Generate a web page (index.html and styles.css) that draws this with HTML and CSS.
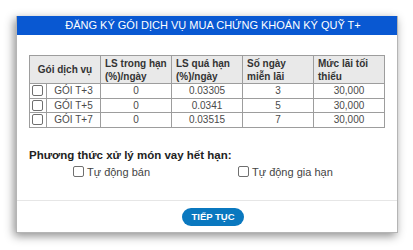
FILE: index.html
```html
<!DOCTYPE html>
<html lang="vi">
<head>
    <meta charset="UTF-8">
    <meta name="viewport" content="width=device-width, initial-scale=1.0">
    <title>Đăng ký gói dịch vụ</title>
    <link rel="stylesheet" href="styles.css">
</head>
<body>
    <div class="dialog">
        <div class="dialog-header">ĐĂNG KÝ GÓI DỊCH VỤ MUA CHỨNG KHOÁN KÝ QUỸ T+</div>

        <div class="dialog-body">
            <table class="goi-table">
                <colgroup>
                    <col class="c-check">
                    <col class="c-ten">
                    <col class="c-so">
                    <col class="c-so">
                    <col class="c-so">
                    <col class="c-so">
                </colgroup>
                <thead>
                    <tr>
                        <th colspan="2" class="col-goi">Gói dịch vụ</th>
                        <th>LS trong hạn<br>(%)/ngày</th>
                        <th>LS quá hạn<br>(%)/ngày</th>
                        <th>Số ngày<br>miễn lãi</th>
                        <th>Mức lãi tối<br>thiểu</th>
                    </tr>
                </thead>
                <tbody>
                    <tr>
                        <td class="col-check"><input type="checkbox"></td>
                        <td>GÓI T+3</td>
                        <td>0</td>
                        <td>0.03305</td>
                        <td>3</td>
                        <td>30,000</td>
                    </tr>
                    <tr>
                        <td class="col-check"><input type="checkbox"></td>
                        <td>GÓI T+5</td>
                        <td>0</td>
                        <td>0.0341</td>
                        <td>5</td>
                        <td>30,000</td>
                    </tr>
                    <tr>
                        <td class="col-check"><input type="checkbox"></td>
                        <td>GÓI T+7</td>
                        <td>0</td>
                        <td>0.03515</td>
                        <td>7</td>
                        <td>30,000</td>
                    </tr>
                </tbody>
            </table>

            <div class="phuong-thuc">Phương thức xử lý món vay hết hạn:</div>
            <div class="options">
                <label class="option opt-ban"><input type="checkbox"> Tự động bán</label>
                <label class="option opt-giahan"><input type="checkbox"> Tự động gia hạn</label>
            </div>
        </div>

        <div class="dialog-footer">
            <button class="btn-tiep-tuc">TIẾP TỤC</button>
        </div>
    </div>
</body>
</html>
```

FILE: styles.css
```css
body {
    margin: 0;
    padding: 16px;
    background-color: #ffffff;
    font-family: 'Liberation Sans', Arial, sans-serif;
}

.dialog {
    width: 380px;
    height: 216px;
    background-color: #ffffff;
    border: 1px solid #b5b5b5;
    border-top: none;
    box-shadow: -2px 3px 9px rgba(0, 0, 0, 0.45);
    display: flex;
    flex-direction: column;
}

.dialog-header {
    background-color: #0958d2;
    color: #ffffff;
    height: 19px;
    line-height: 19px;
    font-size: 11px;
    text-align: center;
    padding-left: 12px;
}

.dialog-body {
    padding: 20px 13px 0 12px;
    flex: 1;
}

/* Bang goi dich vu */
.goi-table {
    border-collapse: collapse;
    table-layout: fixed;
    width: 355px;
    font-size: 10px;
    color: #4a4a4a;
}

.c-check { width: 17px; }
.c-ten { width: 54px; }
.c-so { width: 71px; }

.goi-table th,
.goi-table td {
    border: 1px solid #9d9d9d;
    padding: 0 4px;
    overflow: hidden;
    white-space: nowrap;
}

.goi-table th {
    background-color: #e9e9e9;
    color: #333333;
    text-align: left;
    vertical-align: middle;
    height: 27px;
    line-height: 13px;
    font-weight: bold;
}

.goi-table th.col-goi {
    text-align: center;
}

.goi-table td {
    text-align: center;
    height: 13.5px;
    line-height: 13px;
}

.goi-table td.col-check {
    padding: 0 1px;
}

input[type="checkbox"] {
    appearance: none;
    width: 11px;
    height: 11px;
    margin: 0;
    border: 1px solid #6f6f6f;
    border-radius: 2px;
    background-color: #ffffff;
    vertical-align: middle;
    box-sizing: border-box;
}

.goi-table td.col-check input {
    display: block;
    margin: 0 0 0 1px;
}

.phuong-thuc {
    margin-top: 21px;
    font-size: 11.5px;
    font-weight: bold;
    color: #222222;
}

.options {
    display: flex;
    margin-top: 5px;
    font-size: 11px;
    color: #444444;
}

.option {
    display: flex;
    align-items: center;
    gap: 3px;
}

.opt-ban {
    margin-left: 44px;
    width: 165px;
}

.dialog-footer {
    border-top: 1px solid #e6e6e6;
    height: 31px;
    display: flex;
    align-items: center;
    justify-content: center;
    padding-left: 12px;
}

.btn-tiep-tuc {
    background-color: #0a78bf;
    color: #ffffff;
    border: none;
    border-radius: 10px;
    width: 62px;
    height: 18px;
    font-family: inherit;
    font-size: 9.5px;
    font-weight: bold;
    padding: 0;
    cursor: pointer;
}
```
